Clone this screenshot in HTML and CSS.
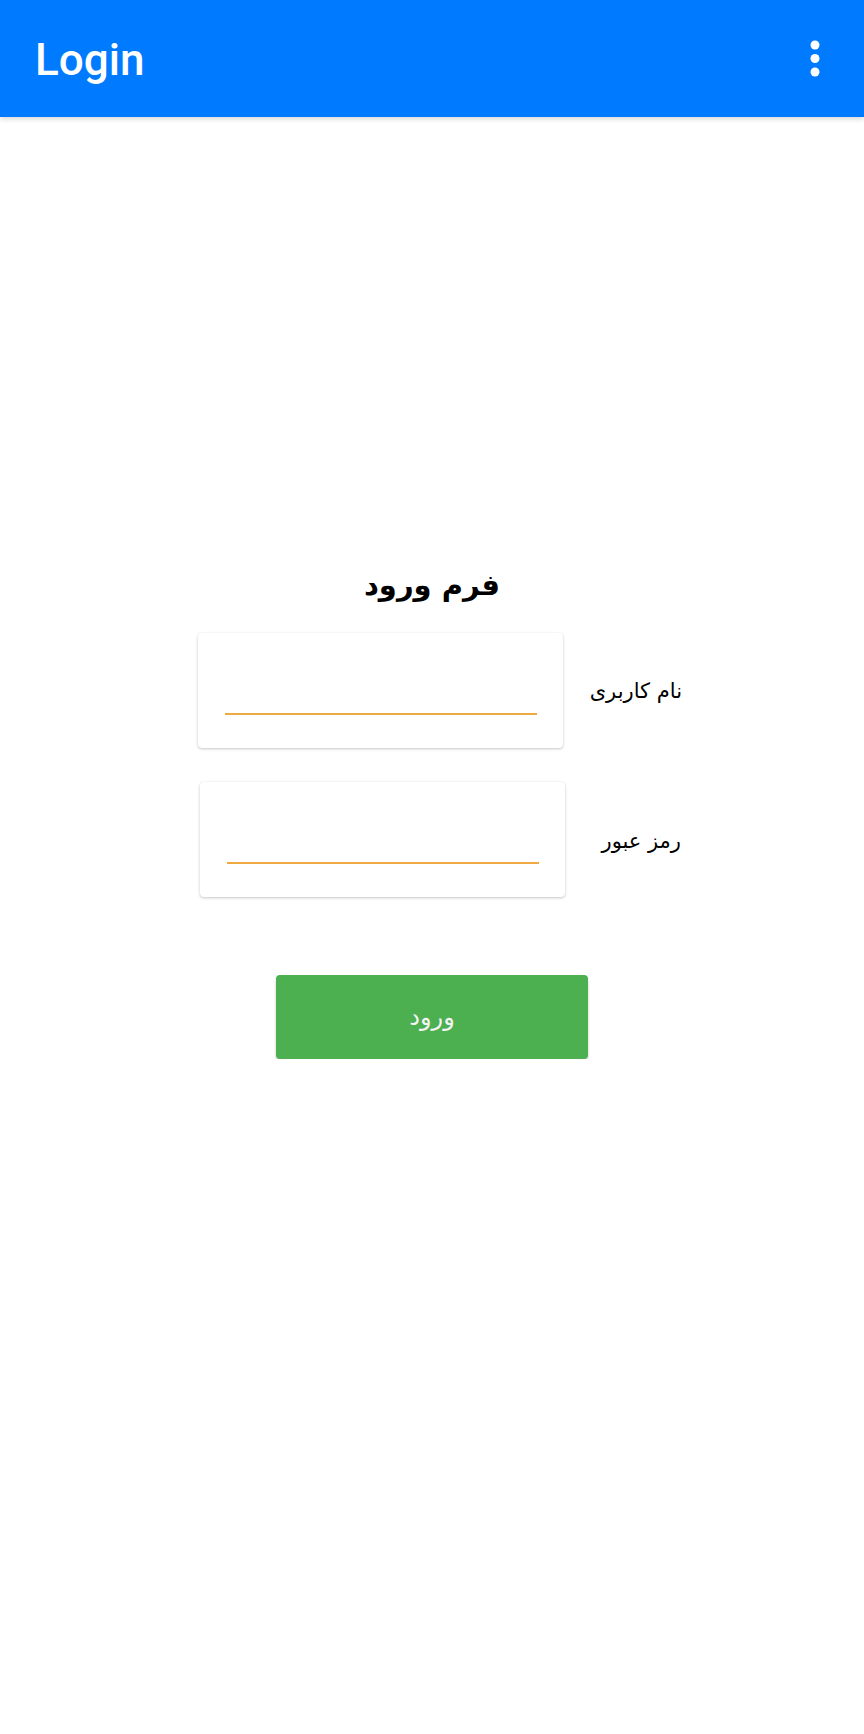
FILE: index.html
```html
<!DOCTYPE html>
<html lang="fa">
<head>
<meta charset="utf-8">
<title>Login</title>
<link rel="stylesheet" href="styles.css">
</head>
<body>
<header class="appbar">
  <h1 class="appbar-title">Login</h1>
  <button class="overflow" aria-label="More options">
    <svg width="10" height="37" viewBox="0 0 10 37"><circle cx="5" cy="5" r="4.5"/><circle cx="5" cy="18.5" r="4.5"/><circle cx="5" cy="32" r="4.5"/></svg>
  </button>
</header>
<main class="login">
  <h2 class="form-title" dir="rtl">فرم ورود</h2>
  <div class="field-row">
    <div class="field-card"><input class="field-input" type="text" aria-label="نام کاربری"></div>
    <label class="field-label" dir="rtl">نام کاربری</label>
  </div>
  <div class="field-row field-row-second">
    <div class="field-card"><input class="field-input" type="password" aria-label="رمز عبور"></div>
    <label class="field-label" dir="rtl">رمز عبور</label>
  </div>
  <div class="actions">
    <button class="submit" dir="rtl">ورود</button>
  </div>
</main>
</body>
</html>
```

FILE: styles.css
```css
html, body {
  margin: 0;
  padding: 0;
  background: #ffffff;
}

body {
  font-family: Roboto, "DejaVu Sans", sans-serif;
  color: #000000;
}

.appbar {
  height: 117px;
  background: #007bff;
  display: flex;
  align-items: center;
  justify-content: space-between;
  padding: 0 44px 0 35px;
  box-shadow: 0 2px 5px rgba(0, 0, 0, 0.16);
  position: relative;
  z-index: 1;
}

.appbar-title {
  margin: 2px 0 0 0;
  font-family: Roboto, sans-serif;
  font-weight: 500;
  font-size: 44px;
  color: #ffffff;
}

.overflow {
  background: none;
  border: 0;
  padding: 0;
  margin: 0;
  display: flex;
  fill: #ffffff;
}

.login {
  padding-top: 447px;
}

.form-title {
  margin: 0 0 27px 0;
  text-align: center;
  font-size: 29px;
  line-height: 42px;
  font-weight: bold;
  font-family: "DejaVu Sans", sans-serif;
  color: #000000;
}

.field-row {
  display: flex;
  align-items: center;
  padding-left: 198px;
  margin-bottom: 34px;
}

.field-row-second {
  padding-left: 200px;
}

.field-card {
  width: 365px;
  height: 115px;
  background: #ffffff;
  border-radius: 4px;
  box-shadow: 0 1px 3px rgba(0, 0, 0, 0.22), 0 0 1px rgba(0, 0, 0, 0.08);
  box-sizing: border-box;
  padding: 0 26px 0 27px;
  display: flex;
  align-items: flex-start;
}

.field-input {
  width: 100%;
  margin-top: 40px;
  height: 40px;
  border: 0;
  border-bottom: 2px solid #efa942;
  outline: none;
  background: transparent;
  padding: 0;
  font-size: 20px;
}

.field-label {
  width: 119px;
  text-align: right;
  font-family: "DejaVu Sans", sans-serif;
  font-size: 21px;
  color: #000000;
}

.field-row-second .field-label {
  width: 116px;
  padding-top: 2px;
}

.actions {
  display: flex;
  justify-content: center;
  padding-top: 44px;
}

.submit {
  width: 312px;
  height: 84px;
  background: #4caf50;
  color: #f4f4f4;
  border: 0;
  border-radius: 4px;
  box-shadow: 0 2px 3px rgba(0, 0, 0, 0.2);
  font-family: "DejaVu Sans", sans-serif;
  font-size: 24px;
}
```
